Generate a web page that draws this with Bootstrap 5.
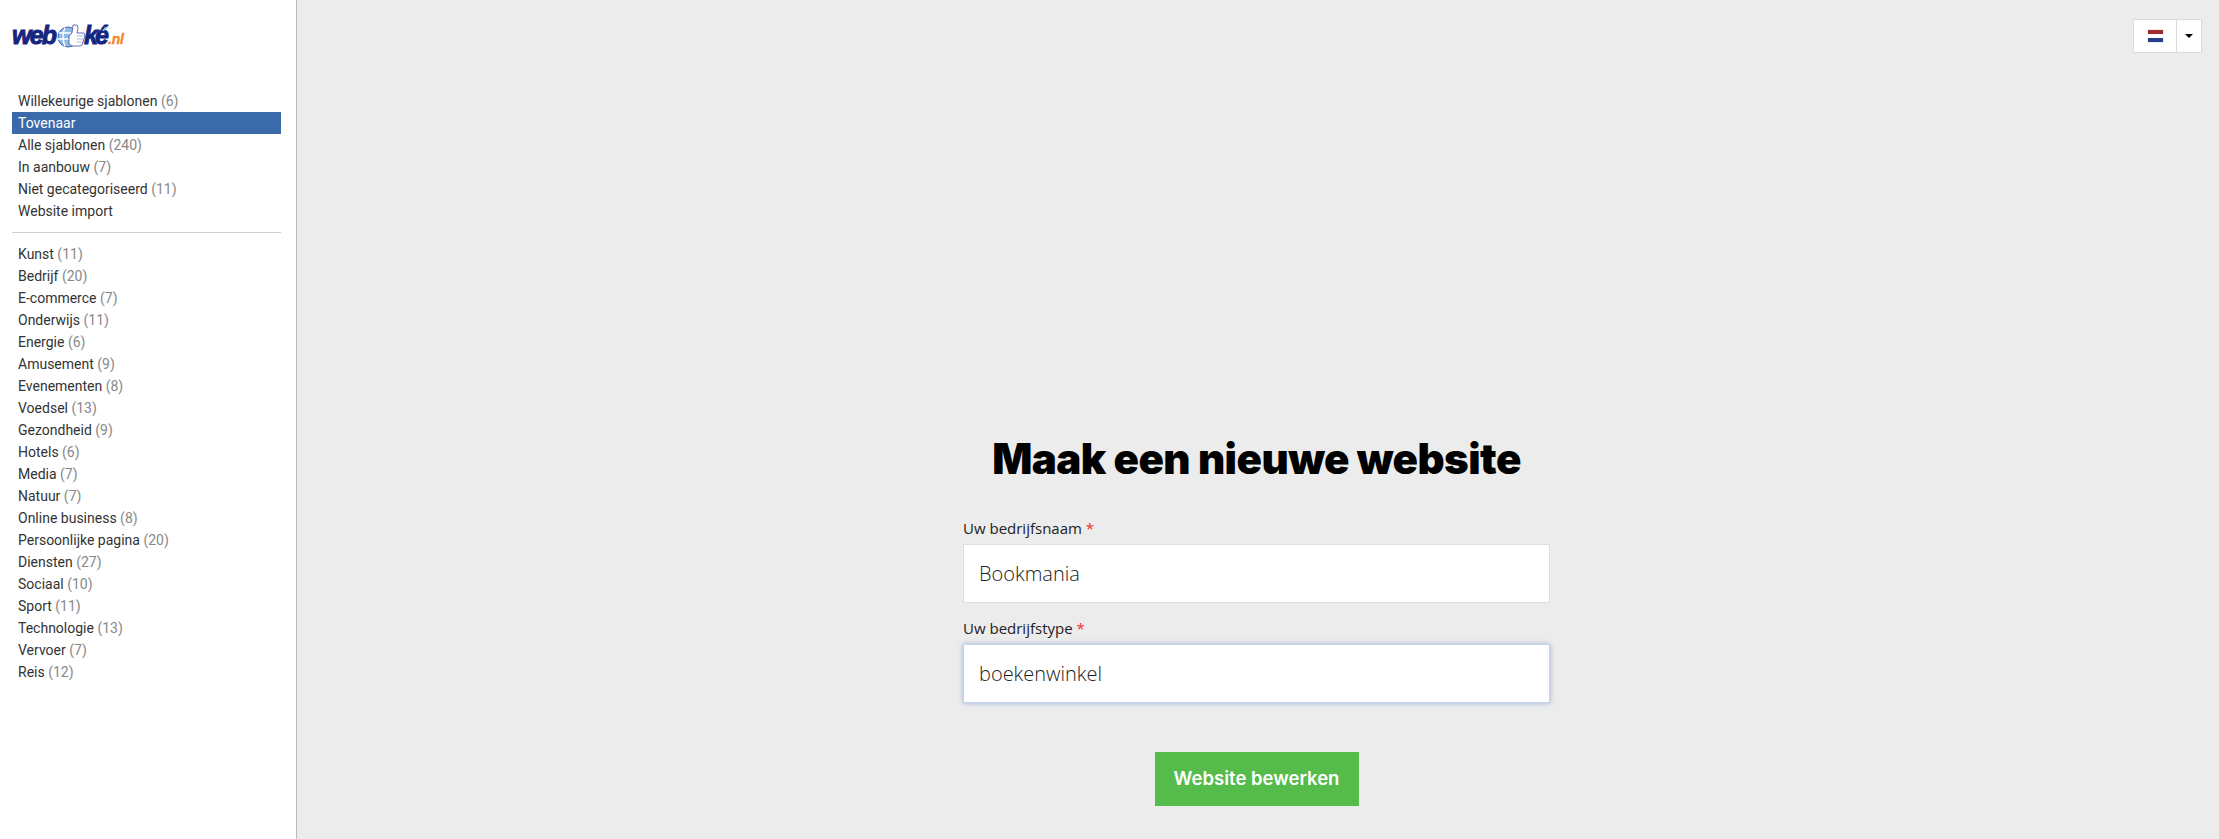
<!DOCTYPE html>
<html lang="nl">
<head>
    <meta charset="UTF-8">
    <title>Maak een nieuwe website</title>
    <link href="https://cdn.jsdelivr.net/npm/bootstrap@5.3.0/dist/css/bootstrap.min.css" rel="stylesheet">
    <style>
        html, body { height: 100%; }
        body { background: #ececec; font-family: Roboto, sans-serif; overflow: hidden; }
        .side-panel { width: 297px; flex: 0 0 297px; background: #fff; border-right: 1px solid #bdbdbd; padding: 0 15px 0 12px; }
        .logo-wrap { height: 90px; padding-top: 20px; }
        .logo-wrap svg { display: block; }
        .cat-link { display: block; height: 22px; line-height: 22px; padding-left: 6px; font-size: 14px; color: #333; text-decoration: none; white-space: nowrap; }
        .cat-link span { color: #888; }
        .cat-link.current { background: #3a6aa9; color: #fff; }
        .side-rule { height: 0; margin: 10px 0; border-top: 1px solid #cfcfcf; opacity: 1; }
        .main-pane { flex: 1 1 auto; min-width: 0; padding: 19px 3px 33px 0; }
        .lang-bar { padding-right: 14px; }
        .lang-btn { background: #fff; border: 1px solid #dcdcdc; border-radius: 0; height: 34px; padding: 0; display: flex; align-items: center; justify-content: center; }
        .lang-btn:hover, .lang-btn:focus { background: #fff; border-color: #dcdcdc; }
        .lang-flag { width: 44px; }
        .lang-caret { width: 26px; margin-left: -1px; }
        .lang-caret::after { margin: 0; border-top-color: #000; }
        .form-box { width: 587px; }
        .form-title { font-family: Inter, sans-serif; font-weight: 900; font-size: 42px; line-height: 60px; color: #000; margin-bottom: 28px; text-align: center; letter-spacing: -.55px; white-space: nowrap; }
        .field-label { font-family: "Open Sans", sans-serif; font-size: 15px; line-height: 21px; color: #222; margin-bottom: 5px; font-weight: 400; }
        .field-label b { color: #f02a2a; font-weight: 400; }
        .field-block { margin-bottom: 14px; }
        .field-input { height: 59px; border: 1px solid #dedede; border-radius: 0; font-family: "Open Sans", sans-serif; font-size: 20px; font-weight: 300; color: #222; padding: 0 15px; }
        .field-input.glow, .field-input:focus { border-color: #c3d4ea; box-shadow: 0 0 5px rgba(90, 135, 200, .55); }
        .btn-row { margin-top: 49px; }
        .submit-btn { width: 204px; height: 54px; background: #55bb4a; border: 0; border-radius: 0; color: #fff; font-family: Inter, sans-serif; font-weight: 600; font-size: 18.5px; padding: 0; }
        .submit-btn:hover { background: #55bb4a; color: #fff; }
    </style>
</head>
<body>
<div class="d-flex h-100">
    <aside class="side-panel">
        <div class="logo-wrap">
            <svg width="114" height="30" viewBox="0 -4 114 30" role="img" aria-label="webkoké.nl">
                <text x="0" y="20" font-family="Liberation Sans" font-size="25" font-weight="700" font-style="italic" fill="#14267f" stroke="#14267f" stroke-width=".9" textLength="45">web</text>
                <circle cx="56" cy="13" r="10" fill="#8dbce6" stroke="#2a3f95" stroke-width=".8"/>
                <path d="M47 9l12 0M46 15l12 0M53 3.500q-4 9 0 19" fill="none" stroke="#fff" stroke-width="1.4"/>
                <path d="M57 12l3-3 1-8h4l1 3-1 5h7l1 3-1 3-1 3-1 3-2 1h-8l-3-2z" fill="#fff" stroke="#3a4fa5" stroke-width=".8"/>
                <path d="M65 12h7M65 15h6M65 18h6" stroke="#8c98cc" stroke-width=".7"/>
                <text x="72" y="20" font-family="Liberation Sans" font-size="25" font-weight="700" font-style="italic" fill="#14267f" stroke="#14267f" stroke-width=".9" textLength="25">ké</text>
                <path d="M90 7l3-4h3l-4 4z" fill="#7fc4ea"/>
                <text x="96" y="20" font-family="Liberation Sans" font-size="14" font-weight="700" font-style="italic" fill="#f5842b" stroke="#f5842b" stroke-width=".3" textLength="16">.nl</text>
            </svg>
        </div>
        <nav id="topCats"></nav>
        <hr class="side-rule">
        <nav id="allCats"></nav>
    </aside>
    <main class="main-pane d-flex flex-column">
        <div class="lang-bar d-flex justify-content-end">
            <div class="btn-group">
                <button class="btn lang-btn lang-flag" type="button" aria-label="Nederlands">
                    <svg width="17" height="14" viewBox="0 0 17 14"><rect width="17" height="14" fill="#eee"/><rect x="1" y="1" width="15" height="4" fill="#a32b2f"/><rect x="1" y="5" width="15" height="4" fill="#fff"/><rect x="1" y="9" width="15" height="4" fill="#24408a"/></svg>
                </button>
                <button class="btn lang-btn lang-caret dropdown-toggle" type="button" data-bs-toggle="dropdown" aria-label="Taal"></button>
            </div>
        </div>
        <form class="form-box mx-auto mt-auto">
            <h1 class="form-title">Maak een nieuwe website</h1>
            <div class="field-block">
                <label class="field-label" for="bedrijfsnaam">Uw bedrijfsnaam <b>*</b></label>
                <input class="form-control field-input" id="bedrijfsnaam" type="text" value="Bookmania">
            </div>
            <div>
                <label class="field-label" for="bedrijfstype">Uw bedrijfstype <b>*</b></label>
                <input class="form-control field-input glow" id="bedrijfstype" type="text" value="boekenwinkel">
            </div>
            <div class="btn-row text-center">
                <button class="btn submit-btn" type="button">Website bewerken</button>
            </div>
        </form>
    </main>
</div>
<script>
    const topCats = [['Willekeurige sjablonen', 6], ['Tovenaar'], ['Alle sjablonen', 240], ['In aanbouw', 7], ['Niet gecategoriseerd', 11], ['Website import']];
    const allCats = [['Kunst', 11], ['Bedrijf', 20], ['E-commerce', 7], ['Onderwijs', 11], ['Energie', 6], ['Amusement', 9], ['Evenementen', 8], ['Voedsel', 13], ['Gezondheid', 9], ['Hotels', 6], ['Media', 7], ['Natuur', 7], ['Online business', 8], ['Persoonlijke pagina', 20], ['Diensten', 27], ['Sociaal', 10], ['Sport', 11], ['Technologie', 13], ['Vervoer', 7], ['Reis', 12]];

    function vulLijst(id, items) {
        document.getElementById(id).innerHTML = items.map(([naam, aantal]) => {
            const telling = aantal ? ` <span>(${aantal})</span>` : '';
            const actief = naam === 'Tovenaar' ? ' current' : '';
            return `<a class="cat-link${actief}" href="#">${naam}${telling}</a>`;
        }).join('');
    }
    vulLijst('topCats', topCats);
    vulLijst('allCats', allCats);
</script>
<script src="https://cdn.jsdelivr.net/npm/bootstrap@5.3.0/dist/js/bootstrap.bundle.min.js"></script>
</body>
</html>
